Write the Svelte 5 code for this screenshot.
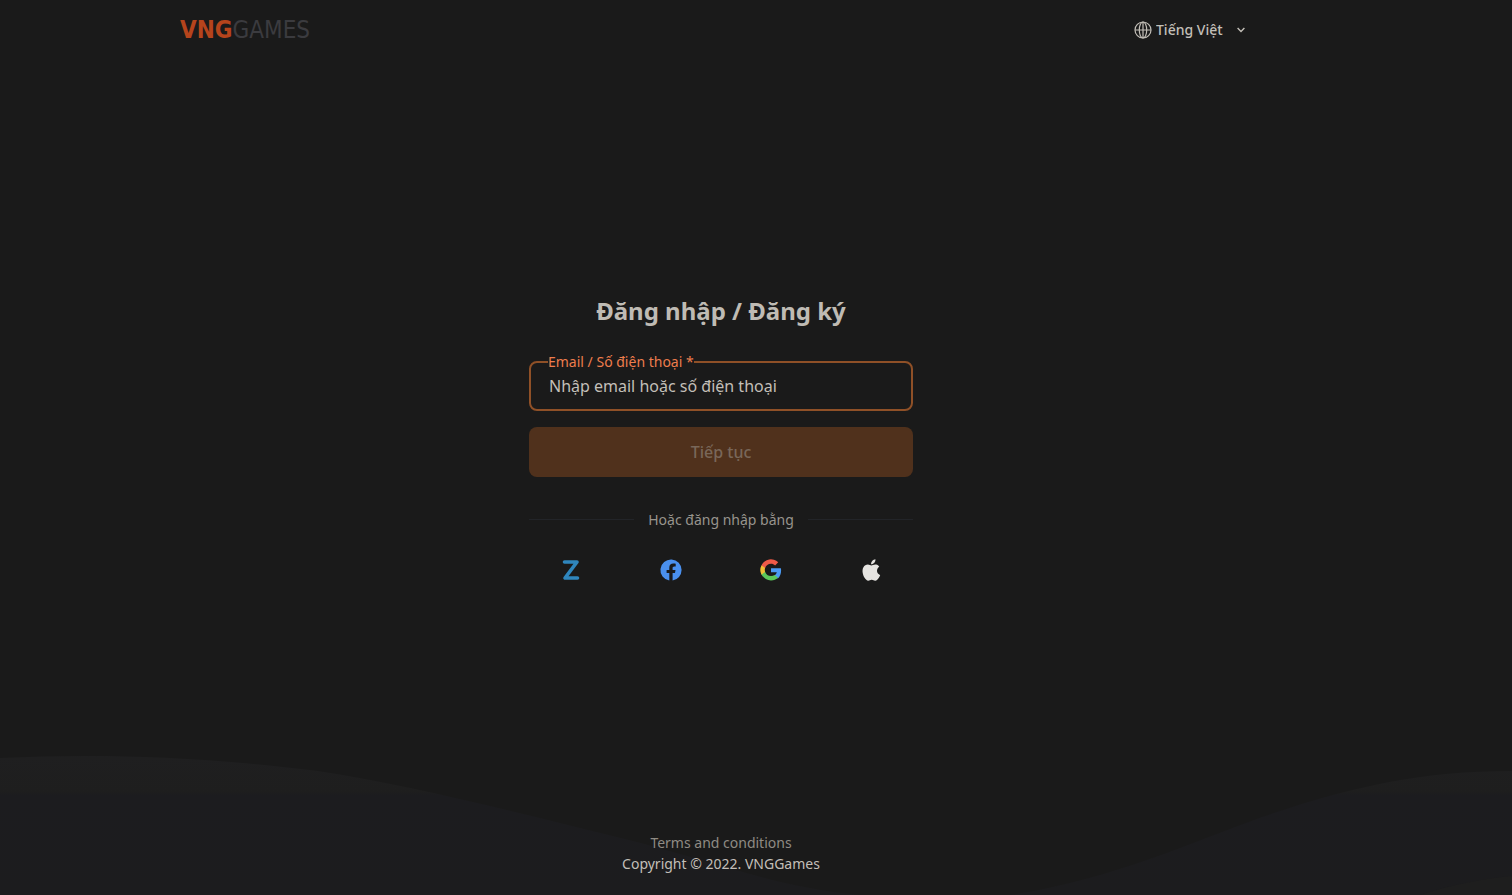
<script lang="ts">
  let account = $state('');

  const languages = ['Tiếng Việt'];
</script>

<div class="page">
  <svg class="waves" viewBox="0 0 1512 140" preserveAspectRatio="none" aria-hidden="true">
    <defs>
      <linearGradient id="wave-fill" x1="0" y1="0" x2="0" y2="1">
        <stop offset="0" stop-color="#1f1f20" />
        <stop offset="0.26" stop-color="#1e1e1e" />
        <stop offset="0.28" stop-color="#1c1c1f" />
        <stop offset="1" stop-color="#1c1c1e" />
      </linearGradient>
    </defs>
    <path
      fill="url(#wave-fill)"
      d="M0 3C90-1 190 0 318 16C410 30 520 58 641 88C730 112 780 132 860 140H1010C1110 125 1190 88 1262 62C1350 32 1420 16 1512 16V140H0Z"
    />
    <path fill="#1e1e1e" d="M1420 140C1450 130 1480 124 1512 121V140Z" />
  </svg>

  <header class="header">
    <a class="logo" href="/" aria-label="VNGGames"><b>VNG</b><span>GAMES</span></a>

    <label class="language">
      <svg class="globe" viewBox="0 0 18 18" aria-hidden="true">
        <circle cx="9" cy="9" r="8" />
        <ellipse cx="9" cy="9" rx="3.7" ry="8" />
        <path d="M1 9H17M9 1V17" />
      </svg>
      <select aria-label="Language">
        {#each languages as name}
          <option>{name}</option>
        {/each}
      </select>
      <svg class="chevron" viewBox="0 0 8 6" aria-hidden="true">
        <path d="M0.6 1L4 4.6L7.4 1" />
      </svg>
    </label>
  </header>

  <main class="main">
    <form class="login">
      <h1>Đăng nhập / Đăng ký</h1>

      <div class="field">
        <label for="account">Email / Số điện thoại *</label>
        <input id="account" type="text" placeholder="Nhập email hoặc số điện thoại" bind:value={account} />
      </div>

      <button class="submit" type="submit" disabled={!account}>Tiếp tục</button>

      <div class="divider"><span>Hoặc đăng nhập bằng</span></div>

      <div class="socials">
        <button type="button" aria-label="Zalo">
          <svg viewBox="0 0 24 24">
            <path d="M5.5 4H18L6 20H18.5" fill="none" stroke="#2f86bd" stroke-width="3.6" stroke-linejoin="round" stroke-linecap="round" />
          </svg>
        </button>
        <button type="button" aria-label="Facebook">
          <svg viewBox="0 0 24 24">
            <path
              fill="#4a90ee"
              d="M22.6 12.1a10.6 10.6 0 1 0-12.3 10.4v-7.4H7.6v-3h2.7V9.7c0-2.7 1.6-4.1 4-4.1 1.2 0 2.4.2 2.4.2v2.6h-1.4c-1.3 0-1.7.8-1.7 1.7v2h2.9l-.5 3h-2.4v7.4a10.6 10.6 0 0 0 9-10.4z"
            />
          </svg>
        </button>
        <button type="button" aria-label="Google">
          <svg viewBox="0 0 24 24">
            <path fill="#4a9af4" d="M22.1 12.2c0-.8-.1-1.4-.2-2H12v4.1h5.8c-.3 1.4-1.1 2.4-2.2 3.2v2.7h3.5c2-1.9 3-4.6 3-8z" />
            <path fill="#5cc85a" d="M12 22.4c2.9 0 5.3-1 7.1-2.6l-3.5-2.7c-1 .7-2.2 1-3.6 1-2.8 0-5.1-1.9-5.900-4.400H2.500v2.800C4.300 20 7.900 22.400 12 22.400z" />
            <path fill="#f0be35" d="M6.100 14c-.2-.6-.3-1.300-.3-2s.1-1.400.3-2V7.200H2.500a10.400 10.400 0 0 0 0 9.500z" />
            <path fill="#ee5a48" d="M12 5.800c1.600 0 3 .6 4.100 1.600l3.100-3.100A10.400 10.400 0 0 0 2.500 7.200L6.100 10C6.900 7.600 9.200 5.800 12 5.800z" />
          </svg>
        </button>
        <button type="button" aria-label="Apple">
          <svg viewBox="2.500 2 20 20">
            <path
              fill="#e6e4e1"
              d="M17.500 12.600c0-2.200 1.800-3.300 1.900-3.400-1-1.500-2.600-1.700-3.200-1.700-1.400-.1-2.700.8-3.400.8s-1.800-.8-2.900-.8c-1.500 0-2.900.9-3.700 2.200-1.600 2.700-.4 6.800 1.100 9 .8 1.100 1.700 2.300 2.900 2.300 1.100 0 1.600-.8 2.900-.8 1.400 0 1.800.8 3 .7 1.200 0 2-1.100 2.800-2.200.9-1.200 1.200-2.400 1.300-2.500-.1 0-2.700-1-2.700-3.600zM15.300 5.900c.6-.8 1-1.800.9-2.900-.9 0-2 .6-2.700 1.400-.6.7-1.100 1.700-.9 2.800 1 .1 2-.5 2.700-1.300z"
            />
          </svg>
        </button>
      </div>
    </form>
  </main>

  <footer class="footer">
    <a href="/terms">Terms and conditions</a>
    <p>Copyright © 2022. VNGGames</p>
  </footer>
</div>

<style>
  :global(body) {
    margin: 0;
    background: #1a1a1a;
  }

  .page {
    position: relative;
    box-sizing: border-box;
    min-height: 100vh;
    padding-right: 70px;
    display: flex;
    flex-direction: column;
    background: #1a1a1a;
    color: #c3bfb8;
    font-family: 'Noto Sans', 'Open Sans', sans-serif;
    font-size: 14px;
    line-height: 20px;
  }

  .waves {
    position: absolute;
    left: 0;
    bottom: 0;
    width: 100%;
    height: 140px;
  }

  .header,
  .main,
  .footer {
    position: relative;
  }

  .header {
    height: 60px;
    padding: 0 197px 0 180px;
    display: flex;
    align-items: center;
    justify-content: space-between;
  }

  .logo {
    color: #3b3b3f;
    font-family: 'DejaVu Sans Condensed', 'DejaVu Sans', sans-serif;
    font-stretch: condensed;
    font-size: 24px;
    line-height: 28px;
    text-decoration: none;
  }

  .logo b {
    color: #b5441c;
  }

  .language {
    display: flex;
    align-items: center;
    gap: 4px;
  }

  .globe {
    width: 18px;
    height: 18px;
    fill: none;
    stroke: #c3bfb8;
    stroke-width: 1.2;
  }

  .language select {
    appearance: none;
    width: 77px;
    padding: 0;
    border: 0;
    background: transparent;
    color: inherit;
    font: inherit;
    font-weight: 500;
  }

  .chevron {
    width: 8px;
    height: 6px;
    fill: none;
    stroke: #c3bfb8;
    stroke-width: 1.4;
  }

  .main {
    flex: 1;
    display: flex;
    align-items: center;
    justify-content: center;
  }

  .login {
    width: 384px;
    padding-bottom: 13px;
    display: flex;
    flex-direction: column;
  }

  h1 {
    margin: 0 0 30px;
    color: #bfbbb4;
    font-size: 24px;
    font-weight: 700;
    line-height: 40px;
    text-align: center;
  }

  .field {
    position: relative;
    margin-bottom: 16px;
  }

  .field label {
    position: absolute;
    top: -9px;
    left: 19px;
    background: #1a1a1a;
    color: #ee7d4d;
  }

  .field input {
    box-sizing: border-box;
    display: block;
    width: 100%;
    height: 50px;
    padding: 0 18px;
    border: 2px solid #8f5027;
    border-radius: 8px;
    outline: 0;
    background: transparent;
    color: #c3bfb8;
    font: inherit;
    font-size: 16px;
  }

  .field input::placeholder {
    color: #c3bfb8;
    opacity: 1;
  }

  .submit {
    height: 50px;
    margin-bottom: 33px;
    border: 0;
    border-radius: 8px;
    background: #50311c;
    color: #796759;
    font: inherit;
    font-size: 16px;
    font-weight: 500;
  }

  .divider {
    margin-bottom: 20px;
    display: flex;
    align-items: center;
    gap: 14px;
    color: #98948d;
  }

  .divider::before,
  .divider::after {
    content: '';
    flex: 1;
    height: 1px;
    background: #222428;
  }

  .socials {
    padding: 0 22px;
    display: flex;
    justify-content: space-between;
  }

  .socials button {
    width: 40px;
    height: 40px;
    padding: 8px;
    border: 0;
    background: transparent;
  }

  .socials svg {
    display: block;
    width: 24px;
    height: 24px;
  }

  .footer {
    padding: 0 0 21px;
    display: flex;
    flex-direction: column;
    align-items: center;
    gap: 1px;
  }

  .footer a {
    color: #8f8b84;
    text-decoration: none;
  }

  .footer p {
    margin: 0;
  }
</style>
